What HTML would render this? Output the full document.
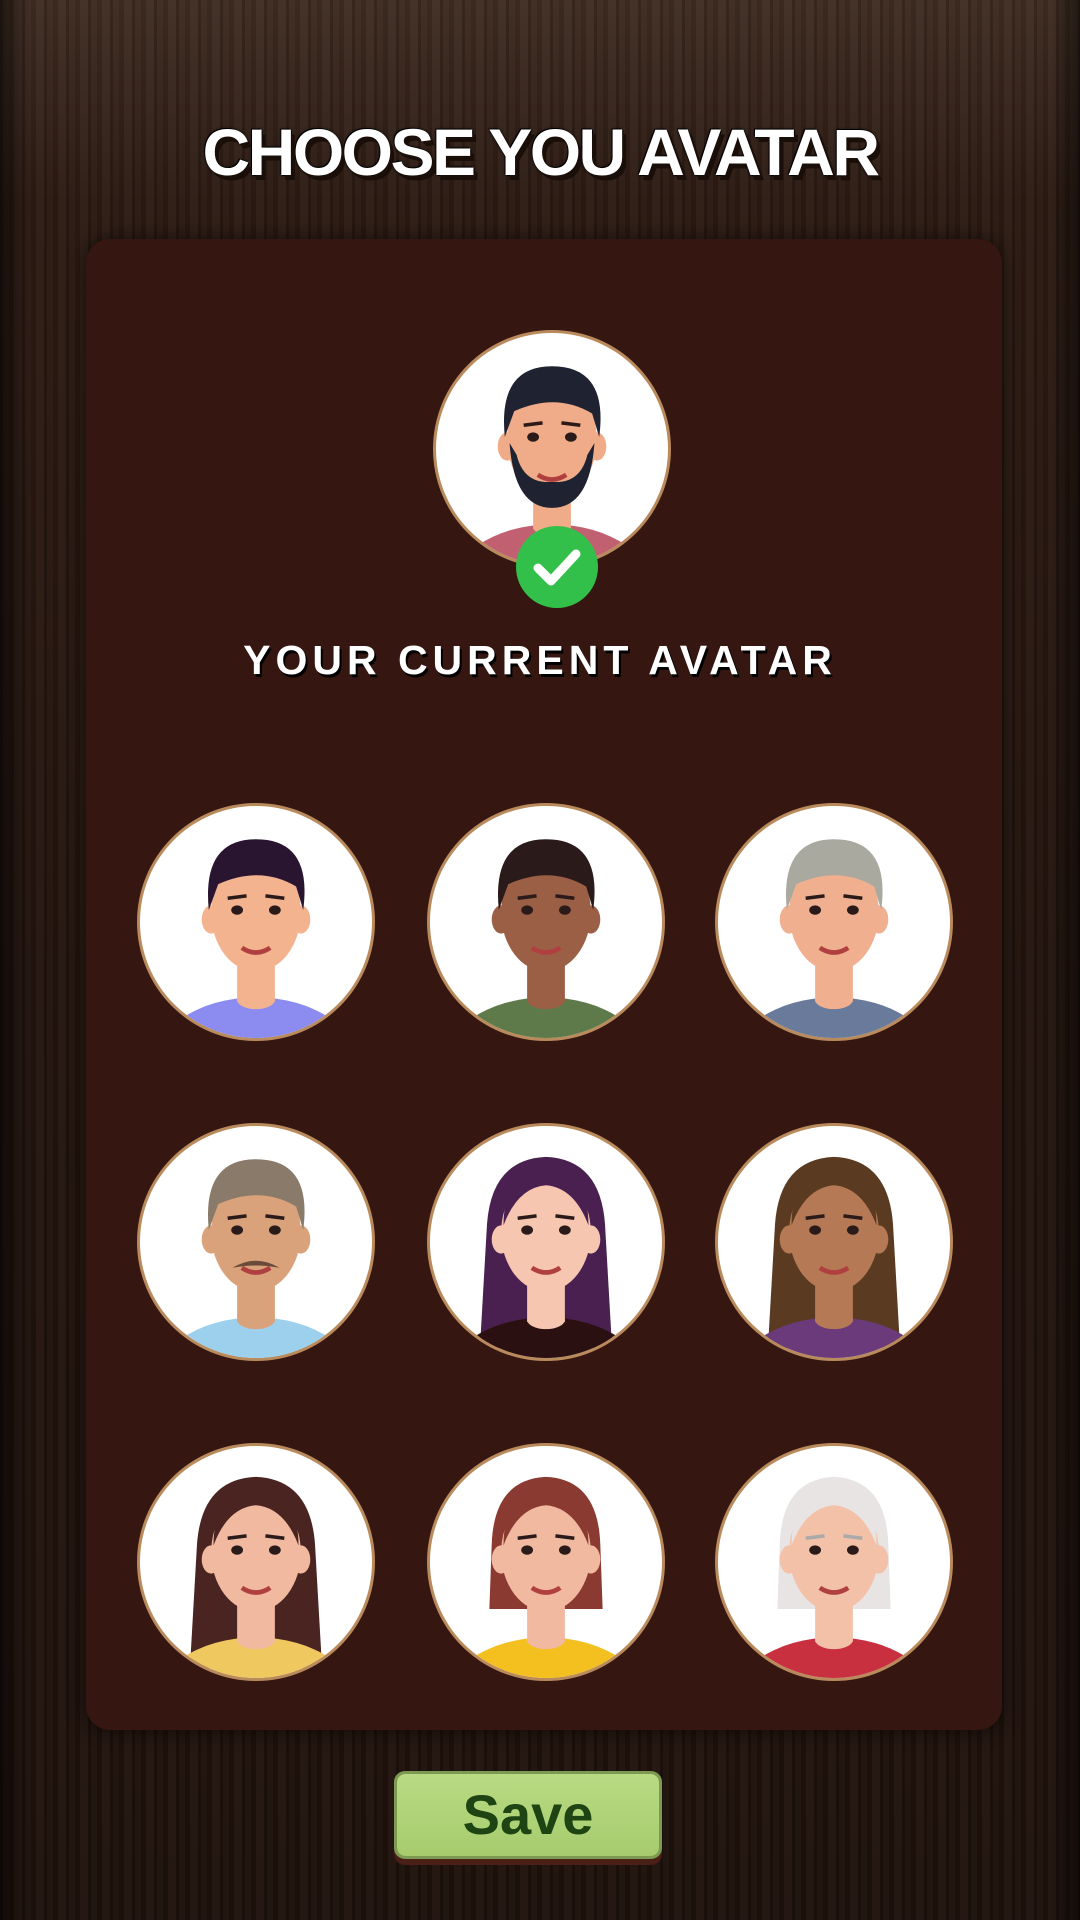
<!DOCTYPE html>
<html><head><meta charset="utf-8"><style>
html,body{margin:0;padding:0}
body{width:1080px;height:1920px;overflow:hidden;position:relative;font-family:"Liberation Sans",sans-serif;
background:linear-gradient(180deg,#3e2c22 0px,#2b1a12 200px,#22130d 1000px,#1e110b 1920px);}
.wood{position:absolute;inset:0;background:repeating-linear-gradient(90deg,rgba(0,0,0,0.12) 0 3px,rgba(255,255,255,0.02) 3px 9px,rgba(0,0,0,0.06) 9px 14px,rgba(255,255,255,0.03) 14px 22px);}
.edgeL{position:absolute;left:0;top:0;width:30px;height:1920px;background:linear-gradient(90deg,rgba(0,0,0,.5),rgba(0,0,0,0))}
.edgeR{position:absolute;right:0;top:0;width:30px;height:1920px;background:linear-gradient(270deg,rgba(0,0,0,.5),rgba(0,0,0,0))}
h1{position:absolute;left:0;width:1080px;top:114px;margin:0;text-align:center;font-size:66px;font-weight:bold;color:#fff;letter-spacing:-2.5px;
text-shadow:4px 5px 0 #1a0e08,0 0 3px #000,1px 1px 0 #000,-1px -1px 0 #000;}
.panel{position:absolute;left:86px;top:239px;width:916px;height:1491px;background:#351611;border-radius:24px;box-shadow:0 0 18px rgba(0,0,0,.6);}
.av{position:absolute;width:232px;height:232px;border-radius:50%;background:#fff;box-shadow:0 0 0 3px #b98a5c;overflow:hidden}
.av svg{display:block}
.check{position:absolute;left:516px;top:526px;width:82px;height:82px;border-radius:50%;background:#33c04a;}
.cur{position:absolute;left:0;width:1080px;top:637px;text-align:center;color:#fff;font-weight:bold;font-size:41px;letter-spacing:5px;text-shadow:2px 3px 0 #000}
.save{position:absolute;left:397px;top:1774px;width:262px;height:82px;border-radius:8px;background:linear-gradient(#b9da82,#a6cc6e);box-shadow:0 0 0 3px #7d9a52,0 6px 0 3px #4a1f15;
text-align:center;line-height:82px;font-size:56px;font-weight:bold;color:#1f4414;}
</style></head><body>
<div class="wood"></div><div class="edgeL"></div><div class="edgeR"></div>
<h1>CHOOSE YOU AVATAR</h1>
<div class="panel"></div>
<div id="avs"></div>
<div class="check"><svg width="82" height="82" viewBox="0 0 82 82"><path d="M22 42 L35 55 L60 28" fill="none" stroke="#fff" stroke-width="9" stroke-linecap="round" stroke-linejoin="round"/></svg></div>
<div class="cur">YOUR CURRENT AVATAR</div>
<div class="save">Save</div>
<script>
var A=[
[552,449,'#f0ac88','#1f2230','#c06070','beard'],
[256,922,'#f3b38f','#2a1530','#8c8cf0','short'],
[546,922,'#9b5f45','#2a1a1a','#5f7a4a','short'],
[834,922,'#f0b090','#a9a9a0','#6a7a9a','short'],
[256,1242,'#d9a27a','#8a7a6a','#9dd0ec','stache'],
[546,1242,'#f6c6b0','#4a2050','#2a1010','long'],
[834,1242,'#b57a55','#5a3a20','#6a3a7a','long'],
[256,1562,'#f0b9a0','#4a2420','#f0c860','long'],
[546,1562,'#f0b9a0','#8a3a30','#f4c020','bob'],
[834,1562,'#f3c0a8','#e8e4e4','#c83040','bob']];
var h='';
A.forEach(function(a){
var s=a[2],hr=a[3],sh=a[4],t=a[5],g='';
if(t=='long')g+='<path d="M66 95 Q70 40 116 38 Q162 40 166 95 L172 200 L60 200 Z" fill="'+hr+'"/>';
if(t=='bob')g+='<path d="M70 95 Q72 40 116 38 Q160 40 162 95 L164 150 L68 150 Z" fill="'+hr+'"/>';
g+='<ellipse cx="116" cy="236" rx="90" ry="62" fill="'+sh+'"/>';
g+='<rect x="100" y="130" width="32" height="48" fill="'+s+'"/>';
g+='<ellipse cx="116" cy="176" rx="16" ry="8" fill="'+s+'"/>';
g+='<ellipse cx="78" cy="108" rx="8" ry="12" fill="'+s+'"/><ellipse cx="154" cy="108" rx="8" ry="12" fill="'+s+'"/>';
g+='<ellipse cx="116" cy="102" rx="38" ry="50" fill="'+s+'"/>';
if(t=='short'||t=='beard'||t=='stache')g+='<path d="M76 100 Q70 40 116 40 Q164 40 156 100 L150 80 Q120 62 84 78 Z" fill="'+hr+'"/>';
else g+='<path d="M80 96 Q80 50 116 50 Q152 50 152 96 Q140 64 116 62 Q92 64 80 96 Z" fill="'+hr+'"/>';
if(t=='beard')g+='<path d="M80 105 Q84 160 116 160 Q148 160 152 105 L146 115 Q140 140 116 138 Q92 140 86 115 Z" fill="'+hr+'"/>';
if(t=='stache')g+='<path d="M96 132 Q116 120 136 132 Q116 128 96 132 Z" fill="#6a4a3a"/>';
g+='<ellipse cx="100" cy="100" rx="5" ry="4" fill="#2a1a1a"/><ellipse cx="132" cy="100" rx="5" ry="4" fill="#2a1a1a"/>';
g+='<path d="M92 90 L108 88 M124 88 L140 90" stroke="'+(t=='bob'&&hr=='#e8e4e4'?'#aaa':'#2a1a1a')+'" stroke-width="3"/>';
g+='<path d="M104 132 Q116 140 128 132" stroke="#b04040" stroke-width="4" fill="none"/>';
h+='<div class="av" style="left:'+(a[0]-116)+'px;top:'+(a[1]-116)+'px"><svg width="232" height="232" viewBox="0 0 232 232"><g transform="translate(116 130) scale(1.18) translate(-116 -122)">'+g+'</g></svg></div>';
});
document.getElementById('avs').innerHTML=h;
</script>
</body></html>
